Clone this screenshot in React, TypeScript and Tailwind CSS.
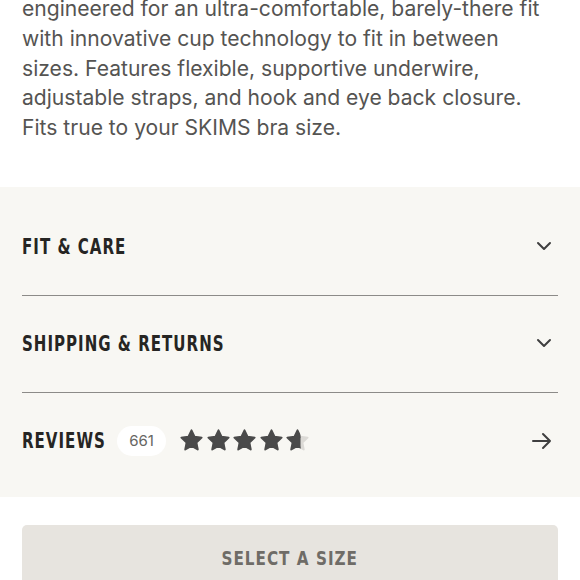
import React from "react";

function Chevron() {
  return (
    <svg width="18" height="18" viewBox="0 0 18 18" fill="none" stroke="#3f3f3f" strokeWidth="2" strokeLinecap="round" strokeLinejoin="round">
      <path d="M3 6 L9 12 L15 6" />
    </svg>
  );
}

function Arrow() {
  return (
    <svg width="22" height="20" viewBox="0 0 22 20" fill="none" stroke="#3f3f3f" strokeWidth="2" strokeLinecap="round" strokeLinejoin="round">
      <path d="M2 10 H19 M12 3 L19 10 L12 17" />
    </svg>
  );
}

const STAR = "M12 2.2l2.9 6.2 6.8.8-5 4.7 1.3 6.7L12 17.3l-6 3.3 1.3-6.7-5-4.7 6.8-.8z";

function Star({ fill = 1, id }: { fill?: number; id: string }) {
  return (
    <svg width="25" height="25" viewBox="0 0 24 24">
      <defs>
        <clipPath id={id}>
          <rect x="0" y="0" width={24 * fill} height="24" />
        </clipPath>
      </defs>
      <path d={STAR} fill="#dcdad6" strokeLinejoin="round" stroke="#dcdad6" strokeWidth="1.8" />
      <path d={STAR} fill="#4a4a4a" stroke="#4a4a4a" strokeWidth="1.8" strokeLinejoin="round" clipPath={`url(#${id})`} />
    </svg>
  );
}

const heading = "inline-block whitespace-nowrap origin-left scale-x-[0.76] font-['DejaVu_Sans_Condensed',sans-serif] font-bold text-[22px] tracking-[0.06em] text-[#262523]";

export default function App() {
  return (
    <div className="w-[580px] h-[580px] overflow-hidden bg-white">
      <p className="mt-[-6px] pl-[22px] pr-[30px] font-['Inter',sans-serif] text-[21.1px] leading-[29.8px] text-[#555452]">
        engineered for an ultra-comfortable, barely-there fit with innovative cup technology to fit in between sizes. Features flexible, supportive underwire, adjustable straps, and hook and eye back closure. Fits true to your SKIMS bra size.
      </p>
      <div className="mt-[44px] bg-[#f8f7f3] px-[22px] pt-[12px] pb-[8px]">
        <div className="flex h-[97px] items-center justify-between border-b-[1.5px] border-[#8c8b88]">
          <span className={heading}>FIT &amp; CARE</span>
          <span className="mr-[5px] mt-[-2px]"><Chevron /></span>
        </div>
        <div className="flex h-[97px] items-center justify-between border-b-[1.5px] border-[#8c8b88]">
          <span className={heading}>SHIPPING &amp; RETURNS</span>
          <span className="mr-[5px] mt-[-2px]"><Chevron /></span>
        </div>
        <div className="flex h-[96px] items-center justify-between">
          <div className="flex items-center">
            <div className="w-[84px]">
              <span className={heading}>REVIEWS</span>
            </div>
            <span className="ml-[11px] flex h-[30px] w-[49px] items-center justify-center rounded-full bg-white font-['Inter',sans-serif] text-[15px] text-[#666562]">661</span>
            <div className="ml-[13px] flex items-center gap-[1.5px]">
              <Star id="s1" />
              <Star id="s2" />
              <Star id="s3" />
              <Star id="s4" />
              <Star id="s5" fill={0.62} />
            </div>
          </div>
          <span className="mr-[5px]"><Arrow /></span>
        </div>
      </div>
      <div className="px-[22px] pt-[28px]">
        <div className="flex h-[70px] items-start justify-center rounded-[5px] bg-[#e7e4df] pt-[19px]">
          <span className="inline-block whitespace-nowrap scale-x-[0.89] font-['DejaVu_Sans_Condensed',sans-serif] font-bold text-[19px] tracking-[0.06em] text-[#6f6c67]">SELECT A SIZE</span>
        </div>
      </div>
    </div>
  );
}
